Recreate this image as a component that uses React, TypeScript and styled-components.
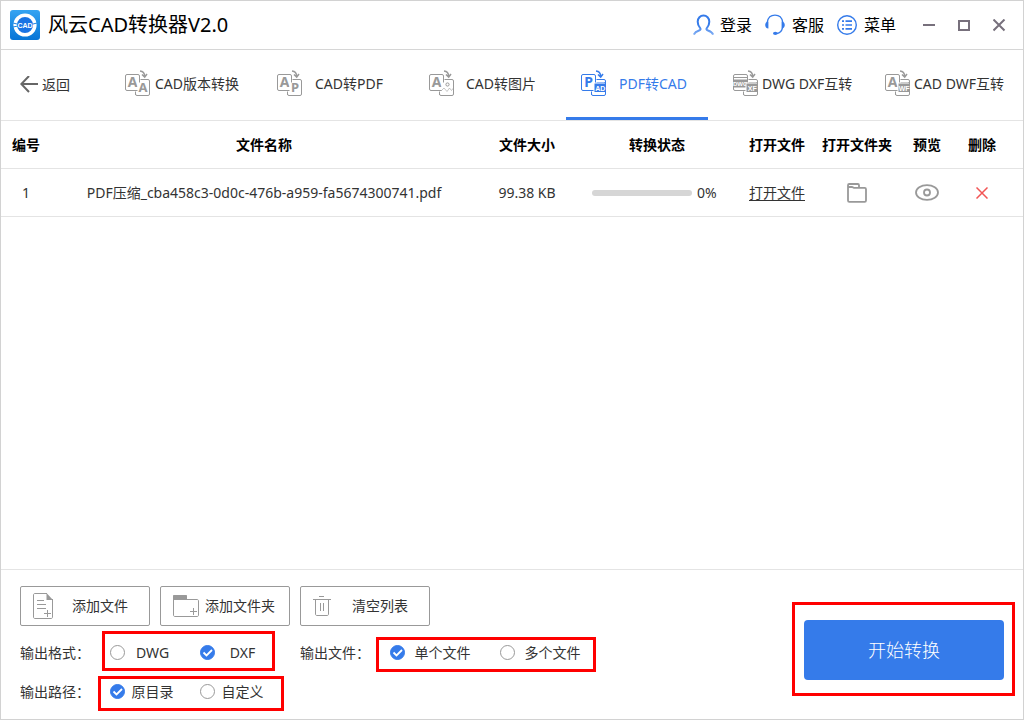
import React, { useState } from 'react';
import styled, { createGlobalStyle, css } from 'styled-components';

const BLUE = '#357bea';
const GRAY = '#999999';
const MARK = '#ff0000';
const LINE = '#e4e4e4';

const GlobalStyle = createGlobalStyle`
  *, *::before, *::after { box-sizing: border-box; }
  body { margin: 0; background: #fff; }
  body, button, input {
    font-family: "Noto Sans", "Noto Sans CJK SC", sans-serif;
    font-size: 14px;
    line-height: 20px;
    color: #333;
  }
  button { margin: 0; padding: 0; border: 0; background: none; cursor: pointer; }
  svg { display: block; flex: none; }
`;

const Window = styled.div`
  display: flex;
  flex-direction: column;
  min-height: 100vh;
  border: 1px solid #d2d2d2;
`;

const TitleBar = styled.header`
  display: flex;
  align-items: center;
  height: 49px;
  padding: 0 6px 0 9px;
  border-bottom: 1px solid #d6d6d6;
`;

const Title = styled.h1`
  flex: 1;
  margin: 0 0 0 8px;
  font-size: 20px;
  line-height: 28px;
  font-weight: 400;
  color: #000;
  white-space: nowrap;
`;

const AccountMenu = styled.nav`
  display: flex;
  gap: 13px;
  margin-right: 16px;
`;

const AccountButton = styled.button`
  display: flex;
  align-items: center;
  gap: 5px;
  font-size: 16px;
  line-height: 24px;
  color: #000;
  white-space: nowrap;
`;

const WindowButton = styled.button`
  display: grid;
  place-items: center;
  width: 35px;
  height: 40px;
`;

const TabBar = styled.nav`
  display: flex;
  height: 71px;
  padding-left: 19px;
  border-bottom: 1px solid ${LINE};
`;

const BackButton = styled.button`
  display: flex;
  align-items: center;
  gap: 4px;
  width: 80px;
  margin-right: 10px;
  white-space: nowrap;
`;

const Tabs = styled.div`
  display: flex;
  gap: 10px;
`;

const Tab = styled.button<{ $active: boolean }>`
  display: flex;
  align-items: center;
  gap: 3px;
  width: 142px;
  padding-left: 15px;
  border-bottom: 3px solid transparent;
  color: #333;
  white-space: nowrap;
  ${(p) => p.$active && css`
    color: ${BLUE};
    border-bottom-color: ${BLUE};
  `}
`;

const TabLabel = styled.span`
  min-width: 86px;
  text-align: center;
`;

const Files = styled.main`
  flex: 1;
`;

const FileTable = styled.table`
  width: 100%;
  table-layout: fixed;
  border-collapse: separate;
  border-spacing: 0;
`;

const Column = styled.col<{ $width?: number }>`
  width: ${(p) => (p.$width ? `${p.$width}px` : 'auto')};
`;

const cell = css`
  height: 48px;
  padding: 0;
  border-bottom: 1px solid ${LINE};
  text-align: center;
  white-space: nowrap;
  &:last-child { padding-right: 16px; }
`;

const HeadCell = styled.th`
  ${cell}
  font-weight: 700;
  color: #000;
`;

const Cell = styled.td`
  ${cell}
`;

const Status = styled.div`
  display: flex;
  align-items: center;
  justify-content: center;
  gap: 5px;
`;

const Progress = styled.progress`
  appearance: none;
  width: 100px;
  height: 6px;
  border: 0;
  border-radius: 3px;
  overflow: hidden;
  &::-webkit-progress-bar { background: #d6d6d6; }
  &::-webkit-progress-value { background: ${BLUE}; }
`;

const Percent = styled.span`
  min-width: 25px;
  text-align: left;
`;

const OpenLink = styled.a`
  color: #333;
  text-decoration: underline;
  text-underline-offset: 2px;
`;

const IconButton = styled.button`
  display: grid;
  place-items: center;
  width: 100%;
`;

const Footer = styled.footer`
  display: flex;
  justify-content: space-between;
  align-items: flex-start;
  padding: 16px 19px 8px;
  border-top: 1px solid ${LINE};
`;

const Actions = styled.div`
  display: flex;
  gap: 10px;
  margin-bottom: 7px;
`;

const ActionButton = styled.button`
  display: flex;
  align-items: center;
  gap: 5px;
  width: 130px;
  height: 40px;
  padding-left: 12px;
  border: 1px solid ${GRAY};
  border-radius: 2px;
`;

const ActionIcon = styled.span`
  width: 27px;
`;

const ActionLabel = styled.span`
  width: 70px;
  text-align: center;
  white-space: nowrap;
`;

const OptionRow = styled.div`
  display: flex;
  height: 39px;
`;

const OptionGroup = styled.div`
  display: flex;
  align-items: center;
  min-width: 280px;
`;

const OptionName = styled.span`
  width: 90px;
  white-space: nowrap;
`;

const Marked = styled.div<{ $inset: string }>`
  position: relative;
  display: flex;
  gap: 25px;
  &::after {
    content: '';
    position: absolute;
    inset: ${(p) => p.$inset};
    border: 3px solid ${MARK};
    pointer-events: none;
  }
`;

const Choice = styled.label`
  display: flex;
  align-items: center;
  gap: 5px;
  cursor: pointer;
`;

const ChoiceLabel = styled.span<{ $wide?: boolean }>`
  width: ${(p) => (p.$wide ? 65 : 45)}px;
  text-align: center;
  white-space: nowrap;
`;

const RadioBox = styled.span`
  display: grid;
  & > * { grid-area: 1 / 1; }
  svg { pointer-events: none; }
`;

const RadioInput = styled.input`
  appearance: none;
  width: 15px;
  height: 15px;
  margin: 0;
  border: 1px solid ${GRAY};
  border-radius: 50%;
  background: #fff;
  &:checked { border-color: ${BLUE}; background: ${BLUE}; }
`;

const StartArea = styled(Marked)`
  margin-top: 34px;
`;

const StartButton = styled.button`
  width: 200px;
  height: 60px;
  border-radius: 4px;
  background: ${BLUE};
  color: #fff;
  font-size: 18px;
  font-weight: 300;
  line-height: 26px;
`;

const Logo = () => (
  <svg width="30" height="30" viewBox="0 0 30 30" aria-hidden="true">
    <defs>
      <linearGradient id="logo" x1="0" y1="0" x2="0" y2="1">
        <stop offset="0" stopColor="#35a4f2" />
        <stop offset="1" stopColor="#0674d6" />
      </linearGradient>
    </defs>
    <rect width="30" height="30" rx="3" fill="url(#logo)" />
    <circle cx="15" cy="15" r="9.8" fill="#1a74e4" stroke="#fff" strokeWidth="3.6" />
    <path d="M3 13l4 1M3 17l5-1M27 13l-4 1" stroke="#1c84e4" strokeWidth="1" />
    <text x="15" y="17.6" textAnchor="middle" fontFamily="Liberation Sans, sans-serif" fontSize="7" fontWeight="700" fill="#fff">CAD</text>
  </svg>
);

const UserIcon = () => (
  <svg width="22" height="22" viewBox="0 0 22 22" fill="none" stroke={BLUE} strokeWidth="1.8" aria-hidden="true">
    <defs>
      <linearGradient id="fade" x1="0" y1="0" x2="0" y2="22" gradientUnits="userSpaceOnUse">
        <stop offset="0.5" stopColor={BLUE} />
        <stop offset="1" stopColor="#8db6f5" />
      </linearGradient>
    </defs>
    <path stroke="url(#fade)" strokeWidth="2" d="M.8 20.6c1-2.300 3.200-3.400 5.300-4.100 1.500-.5 1.900-1.500.9-2.700C5.600 12.100 4.700 10 4.700 7.700 4.700 4.200 7.300 1.500 10.500 1.500s5.800 2.700 5.800 6.200c0 2.300-.9 4.400-2.300 6.100-1 1.200-.6 2.200.9 2.700 2.100.7 4.300 1.800 5.300 4.100" />
  </svg>
);

const HeadsetIcon = () => (
  <svg width="22" height="22" viewBox="0 0 22 22" fill="none" stroke={BLUE} aria-hidden="true">
    <path strokeWidth="1.300" d="M2.300 8C3 3.900 6 1.100 10 1.100S17 3.900 17.700 8" />
    <path strokeWidth="1.300" d="M17.500 14c-.8 3-2.700 5-5.500 5.500" />
    <path fill={BLUE} stroke="none" d="M3.400 7.500v7C1.300 14.300.2 12.900.2 11s1.100-3.300 3.200-3.500zM16.600 7.500v7c2.100-.2 3.200-1.600 3.200-3.500s-1.100-3.300-3.200-3.500z" />
    <ellipse cx="10.300" cy="19.300" rx="2.300" ry="1.600" fill={BLUE} stroke="none" />
  </svg>
);

const MenuIcon = () => (
  <svg width="22" height="22" viewBox="0 0 22 22" fill="none" stroke={BLUE} aria-hidden="true">
    <circle cx="10" cy="11" r="9.300" strokeWidth="1.400" />
    <path strokeWidth="1.700" d="M5 7.200h2M8.500 7.200H15M5 11h2M8.500 11H15M5 14.800h2M8.500 14.800H15" />
  </svg>
);

const BackIcon = () => (
  <svg width="18" height="18" viewBox="0 0 18 18" fill="none" stroke="#666" strokeWidth="2" aria-hidden="true">
    <path d="M18 8H1.500M9 0L1.300 8 9 16" />
  </svg>
);

type Sheet = { kind: 'letter' | 'band' | 'image'; text?: string };

/* Two overlapping sheets joined by a curved arrow; the front sheet is cut away around the rear sheet's content. */
const ConvertIcon = ({ from, to, color }: { from: Sheet; to: Sheet; color: string }) => (
  <svg width="26" height="27" viewBox="0 0 26 27" aria-hidden="true">
    <rect x="10.500" y="9.500" width="14" height="16" rx="1.500" fill="#fff" stroke={color} />
    {to.kind === 'band' && <path d="M14 12.500h11" stroke={color} />}
    <rect x="-.5" y="3" width="16" height="19" fill="#fff" />
    <path d="M10.500 21.500V25" stroke={color} />
    <rect x=".5" y="4.500" width="14" height="16" rx="1.500" fill="#fff" stroke={color} />
    {from.kind === 'letter' && (
      <text x="7.500" y="17" textAnchor="middle" fontFamily="Noto Sans, sans-serif" fontSize="14" fontWeight="700" fill={color}>{from.text}</text>
    )}
    {from.kind === 'band' && (
      <>
        <path d="M0 7.500h15" stroke={color} />
        <rect y="9.500" width="15" height="8" fill={color} />
        <text x="7.300" y="16" textAnchor="middle" fontFamily="Liberation Sans, sans-serif" fontSize="6" fontWeight="700" fill="#fff">{from.text}</text>
      </>
    )}
    <rect x="12.500" y="12.500" width="11" height="10.500" fill="#fff" />
    {to.kind === 'letter' && (
      <text x="18" y="22" textAnchor="middle" fontFamily="Noto Sans, sans-serif" fontSize="13" fontWeight="700" fill={color}>{to.text}</text>
    )}
    {to.kind === 'band' && (
      <>
        <rect x="13.500" y="13.500" width="11.500" height="8.500" fill={color} />
        <text x="19.200" y="20.600" textAnchor="middle" fontFamily="Liberation Sans, sans-serif" fontSize="7" fontWeight="700" fill="#fff">{to.text}</text>
      </>
    )}
    {to.kind === 'image' && (
      <g fill="none" stroke={color}>
        <circle cx="18.500" cy="14.500" r="1.600" />
        <path strokeOpacity=".55" d="M12 21l3-3 3 3.500 2.500-3.500 2 2.500 2-2.500" />
      </g>
    )}
    <path d="M15 1c3 .2 4.600 2 4.700 5.500M17 4.500l2.700 2.700 2.300-3.200" fill="none" stroke={color} strokeWidth="1.500" />
  </svg>
);

const FolderIcon = () => (
  <svg width="20" height="20" viewBox="0 0 20 20" fill="none" stroke={GRAY} strokeWidth="1.800" strokeLinejoin="round" aria-hidden="true">
    <path d="M1 5V2.200C1 1.500 1.500 1 2.200 1h8.600c.7 0 1.200.5 1.200 1.200V5M1 5v12.500c0 .8.500 1.300 1.300 1.300h15.400c.8 0 1.300-.5 1.300-1.300V6.200c0-.8-.5-1.300-1.300-1.300H7.500C6.500 4.900 6 4 5 4H1.500" />
  </svg>
);

const EyeIcon = () => (
  <svg width="24" height="17" viewBox="0 0 24 17" fill="none" stroke={GRAY} strokeWidth="1.800" aria-hidden="true">
    <ellipse cx="12" cy="8.500" rx="11" ry="7.300" />
    <circle cx="12" cy="8.500" r="3" />
  </svg>
);

const DeleteIcon = () => (
  <svg width="12" height="12" viewBox="0 0 12 12" stroke="#f25555" strokeWidth="1.500" aria-hidden="true">
    <path d="M.5.5l11 11M11.500.5l-11 11" />
  </svg>
);

const AddFileIcon = () => (
  <svg width="21" height="26" viewBox="0 0 21 26" fill="none" stroke={GRAY} aria-hidden="true">
    <path d="M14 .5H2C1 .5.500 1 .500 2v22c0 1 .5 1.500 1.500 1.500h16c1 0 1.500-.5 1.500-1.500V6" />
    <path fill={GRAY} stroke="none" d="M13.500 0l6.500 7h-6.500z" />
    <path d="M4 7.500h7M4 11.500h9M4 15.500h9M14.500 17v7M11 20.500h7" />
  </svg>
);

const AddFolderIcon = () => (
  <svg width="27" height="22" viewBox="0 0 27 22" fill="none" stroke={GRAY} aria-hidden="true">
    <path d="M.5 3v17c0 1 .5 1.500 1.500 1.500h22c1 0 1.500-.5 1.500-1.500V6c0-1-.5-1.500-1.500-1.500H14" />
    <path fill={GRAY} stroke="none" d="M0 5V1c0-.6.4-1 1-1h12c.6 0 1 .4 1 1v4z" />
    <path d="M20.500 13v7M17 16.500h7" />
  </svg>
);

const TrashIcon = () => (
  <svg width="18" height="20" viewBox="0 0 18 20" fill="none" stroke={GRAY} aria-hidden="true">
    <path d="M0 3.500h18M6 .5h5M2.500 3.500V18c0 1 .5 1.500 1.500 1.500h10c1 0 1.500-.5 1.500-1.500V3.500M7.500 7v8M10.500 7v8" />
  </svg>
);

const TABS: { label: string; from: Sheet; to: Sheet }[] = [
  { label: 'CAD版本转换', from: { kind: 'letter', text: 'A' }, to: { kind: 'letter', text: 'A' } },
  { label: 'CAD转PDF', from: { kind: 'letter', text: 'A' }, to: { kind: 'letter', text: 'P' } },
  { label: 'CAD转图片', from: { kind: 'letter', text: 'A' }, to: { kind: 'image' } },
  { label: 'PDF转CAD', from: { kind: 'letter', text: 'P' }, to: { kind: 'band', text: 'AD' } },
  { label: 'DWG DXF互转', from: { kind: 'band', text: 'DWG' }, to: { kind: 'band', text: 'XF' } },
  { label: 'CAD DWF互转', from: { kind: 'letter', text: 'A' }, to: { kind: 'band', text: 'WF' } },
];

type ChoicesProps = {
  name: string;
  label: string;
  options: string[];
  initial: string;
  inset: string;
  wide?: boolean;
};

const Choices = ({ name, label, options, initial, inset, wide }: ChoicesProps) => {
  const [value, setValue] = useState(initial);
  return (
    <OptionGroup role="radiogroup" aria-labelledby={`${name}-label`}>
      <OptionName id={`${name}-label`}>{label}</OptionName>
      <Marked $inset={inset}>
        {options.map((o) => (
          <Choice key={o}>
            <RadioBox>
              <RadioInput type="radio" name={name} value={o} checked={value === o} onChange={() => setValue(o)} />
              {value === o && (
                <svg width="15" height="15" viewBox="0 0 15 15" fill="none" stroke="#fff" strokeWidth="1.800" aria-hidden="true">
                  <path d="M3.500 7.500l3 3L12 5" />
                </svg>
              )}
            </RadioBox>
            <ChoiceLabel $wide={wide}>{o}</ChoiceLabel>
          </Choice>
        ))}
      </Marked>
    </OptionGroup>
  );
};

export default function App() {
  const [active, setActive] = useState('PDF转CAD');
  return (
    <>
      <GlobalStyle />
      <Window>
        <TitleBar>
          <Logo />
          <Title>风云CAD转换器V2.0</Title>
          <AccountMenu>
            <AccountButton><UserIcon />登录</AccountButton>
            <AccountButton><HeadsetIcon />客服</AccountButton>
            <AccountButton><MenuIcon />菜单</AccountButton>
          </AccountMenu>
          <WindowButton aria-label="最小化">
            <svg width="13" height="13" stroke="#77707c" strokeWidth="2"><path d="M0 6h12" /></svg>
          </WindowButton>
          <WindowButton aria-label="最大化">
            <svg width="13" height="13" fill="none" stroke="#77707c" strokeWidth="2"><rect x="1" y="2" width="10" height="9" /></svg>
          </WindowButton>
          <WindowButton aria-label="关闭">
            <svg width="13" height="13" stroke="#77707c" strokeWidth="2"><path d="M.5.5l11 11M11.500.5l-11 11" /></svg>
          </WindowButton>
        </TitleBar>

        <TabBar>
          <BackButton><BackIcon />返回</BackButton>
          <Tabs>
            {TABS.map((t) => (
              <Tab key={t.label} $active={t.label === active} onClick={() => setActive(t.label)}>
                <ConvertIcon from={t.from} to={t.to} color={t.label === active ? BLUE : GRAY} />
                <TabLabel>{t.label}</TabLabel>
              </Tab>
            ))}
          </Tabs>
        </TabBar>

        <Files>
          <FileTable>
            <colgroup>
              <Column $width={50} />
              <Column />
              <Column $width={100} />
              <Column $width={160} />
              <Column $width={80} />
              <Column $width={80} />
              <Column $width={60} />
              <Column $width={66} />
            </colgroup>
            <thead>
              <tr>
                {['编号', '文件名称', '文件大小', '转换状态', '打开文件', '打开文件夹', '预览', '删除'].map((h) => (
                  <HeadCell key={h} scope="col">{h}</HeadCell>
                ))}
              </tr>
            </thead>
            <tbody>
              <tr>
                <Cell>1</Cell>
                <Cell>PDF压缩_cba458c3-0d0c-476b-a959-fa5674300741.pdf</Cell>
                <Cell>99.38 KB</Cell>
                <Cell>
                  <Status>
                    <Progress value={0} max={100} aria-label="转换状态" />
                    <Percent>0%</Percent>
                  </Status>
                </Cell>
                <Cell><OpenLink href="#open">打开文件</OpenLink></Cell>
                <Cell><IconButton aria-label="打开文件夹"><FolderIcon /></IconButton></Cell>
                <Cell><IconButton aria-label="预览"><EyeIcon /></IconButton></Cell>
                <Cell><IconButton aria-label="删除"><DeleteIcon /></IconButton></Cell>
              </tr>
            </tbody>
          </FileTable>
        </Files>

        <Footer>
          <div>
            <Actions>
              <ActionButton><ActionIcon><AddFileIcon /></ActionIcon><ActionLabel>添加文件</ActionLabel></ActionButton>
              <ActionButton><ActionIcon><AddFolderIcon /></ActionIcon><ActionLabel>添加文件夹</ActionLabel></ActionButton>
              <ActionButton><ActionIcon><TrashIcon /></ActionIcon><ActionLabel>清空列表</ActionLabel></ActionButton>
            </Actions>
            <OptionRow>
              <Choices name="format" label="输出格式：" options={['DWG', 'DXF']} initial="DXF" inset="-12px -10px -8px -8px" />
              <Choices name="output" label="输出文件：" options={['单个文件', '多个文件']} initial="单个文件" inset="-6px -11px -9px -14px" wide />
            </OptionRow>
            <OptionRow>
              <Choices name="path" label="输出路径：" options={['原目录', '自定义']} initial="原目录" inset="-6px -19px -9px -12px" />
            </OptionRow>
          </div>
          <StartArea $inset="-18px -11px -16px -12px">
            <StartButton>开始转换</StartButton>
          </StartArea>
        </Footer>
      </Window>
    </>
  );
}
